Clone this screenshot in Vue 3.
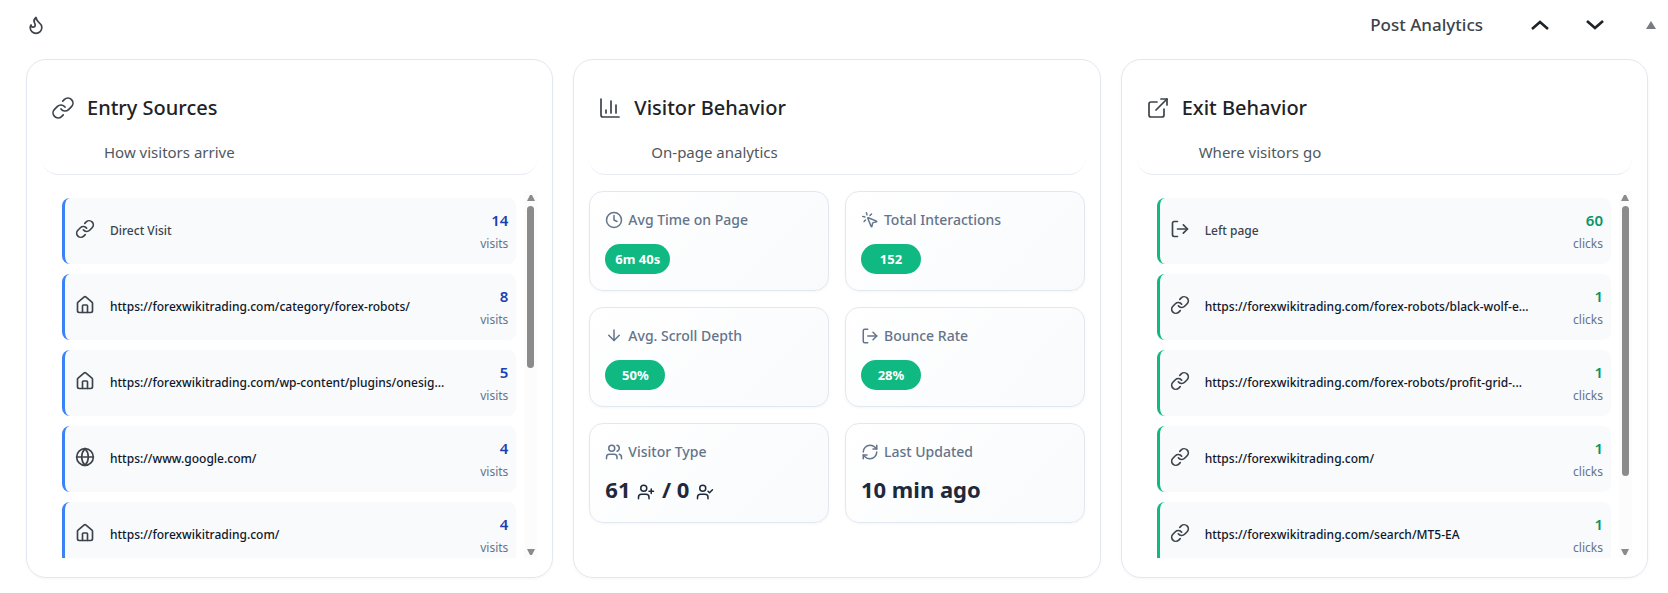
<script setup>
import { h } from 'vue'

const link =
  '<path d="M10 13a5 5 0 0 0 7.54.54l3-3a5 5 0 0 0-7.07-7.07l-1.72 1.71"/><path d="M14 11a5 5 0 0 0-7.54-.54l-3 3a5 5 0 0 0 7.07 7.07l1.71-1.71"/>'
const person = '<path d="M16 21v-2a4 4 0 0 0-4-4H6a4 4 0 0 0-4 4v2"/><circle cx="9" cy="7" r="4"/>'

const shapes = {
  flame:
    '<path d="M8.5 14.5A2.5 2.5 0 0 0 11 12c0-1.38-.5-2-1-3-1.072-2.143-.224-4.054 2-6 .5 2.5 2 4.9 4 6.5 2 1.6 3 3.5 3 5.5a7 7 0 1 1-14 0c0-1.153.433-2.294 1-3a2.5 2.5 0 0 0 2.5 2.5z"/>',
  link,
  chart: '<path d="M3 3v16a2 2 0 0 0 2 2h16"/><path d="M18 17V9"/><path d="M13 17V5"/><path d="M8 17v-3"/>',
  external:
    '<path d="M15 3h6v6"/><path d="M10 14 21 3"/><path d="M18 13v6a2 2 0 0 1-2 2H5a2 2 0 0 1-2-2V8a2 2 0 0 1 2-2h6"/>',
  house:
    '<path d="M15 21v-8a1 1 0 0 0-1-1h-4a1 1 0 0 0-1 1v8"/><path d="M3 10a2 2 0 0 1 .709-1.528l7-5.999a2 2 0 0 1 2.582 0l7 5.999A2 2 0 0 1 21 10v9a2 2 0 0 1-2 2H5a2 2 0 0 1-2-2z"/>',
  globe:
    '<circle cx="12" cy="12" r="10"/><path d="M12 2a14.5 14.5 0 0 0 0 20 14.5 14.5 0 0 0 0-20"/><path d="M2 12h20"/>',
  exit: '<path d="M9 21H5a2 2 0 0 1-2-2V5a2 2 0 0 1 2-2h4"/><path d="m16 17 5-5-5-5"/><path d="M21 12H9"/>',
  clock: '<circle cx="12" cy="12" r="10"/><path d="M12 6v6l4 2"/>',
  click:
    '<path d="M14 4.1 12 6"/><path d="m5.1 8-2.9-.8"/><path d="m6 12-1.9 2"/><path d="M7.2 2.2 8 5.1"/><path d="M9.037 9.69a.498.498 0 0 1 .653-.653l11 4.5a.5.5 0 0 1-.074.949l-4.349 1.041a1 1 0 0 0-.74.739l-1.04 4.35a.5.5 0 0 1-.95.074z"/>',
  down: '<path d="M12 4v14"/><path d="m19 11-7 7-7-7"/>',
  users: person + '<path d="M22 21v-2a4 4 0 0 0-3-3.87"/><path d="M16 3.13a4 4 0 0 1 0 7.75"/>',
  userPlus: person + '<path d="M19 8v6"/><path d="M22 11h-6"/>',
  userCheck: person + '<path d="m16 11 2 2 4-4"/>',
  refresh:
    '<path d="M3 12a9 9 0 0 1 9-9 9.75 9.75 0 0 1 6.74 2.74L21 8"/><path d="M21 3v5h-5"/><path d="M21 12a9 9 0 0 1-9 9 9.75 9.75 0 0 1-6.74-2.74L3 16"/><path d="M8 16H3v5"/>',
}

const Icon = (props) =>
  h('svg', {
    class: 'icon',
    viewBox: '0 0 24 24',
    'aria-hidden': 'true',
    innerHTML: shapes[props.name],
  })
Icon.props = ['name']

const cards = [
  {
    id: 'entry',
    icon: 'link',
    title: 'Entry Sources',
    subtitle: 'How visitors arrive',
    unit: 'visits',
    thumb: 48,
    items: [
      { icon: 'link', text: 'Direct Visit', count: 14 },
      { icon: 'house', text: 'https://forexwikitrading.com/category/forex-robots/', url: true, count: 8 },
      { icon: 'house', text: 'https://forexwikitrading.com/wp-content/plugins/onesig...', url: true, count: 5 },
      { icon: 'globe', text: 'https://www.google.com/', url: true, count: 4 },
      { icon: 'house', text: 'https://forexwikitrading.com/', url: true, count: 4 },
    ],
  },
  {
    id: 'behavior',
    icon: 'chart',
    title: 'Visitor Behavior',
    subtitle: 'On-page analytics',
    metrics: [
      { icon: 'clock', label: 'Avg Time on Page', pill: '6m 40s' },
      { icon: 'click', label: 'Total Interactions', pill: '152' },
      { icon: 'down', label: 'Avg. Scroll Depth', pill: '50%' },
      { icon: 'exit', label: 'Bounce Rate', pill: '28%' },
      { icon: 'users', label: 'Visitor Type', visitors: { fresh: 61, returning: 0 } },
      { icon: 'refresh', label: 'Last Updated', value: '10 min ago' },
    ],
  },
  {
    id: 'exit',
    icon: 'external',
    title: 'Exit Behavior',
    subtitle: 'Where visitors go',
    unit: 'clicks',
    thumb: 80,
    items: [
      { icon: 'exit', text: 'Left page', count: 60 },
      { icon: 'link', text: 'https://forexwikitrading.com/forex-robots/black-wolf-e...', url: true, count: 1 },
      { icon: 'link', text: 'https://forexwikitrading.com/forex-robots/profit-grid-...', url: true, count: 1 },
      { icon: 'link', text: 'https://forexwikitrading.com/', url: true, count: 1 },
      { icon: 'link', text: 'https://forexwikitrading.com/search/MT5-EA', url: true, count: 1 },
    ],
  },
]
</script>

<template>
  <div class="panel">
    <header class="bar">
      <Icon name="flame" class="bar-icon" />
      <h2 class="bar-title">Post Analytics</h2>
      <div class="bar-actions">
        <button type="button" aria-label="Move up">
          <svg class="chevron" viewBox="0 0 18 10"><path d="m1 9 8-7 8 7" /></svg>
        </button>
        <button type="button" aria-label="Move down">
          <svg class="chevron" viewBox="0 0 18 10"><path d="m1 1 8 7 8-7" /></svg>
        </button>
      </div>
      <button type="button" class="toggle" aria-label="Toggle panel">
        <svg viewBox="0 0 10 8"><path d="M5 0l5 8H0z" /></svg>
      </button>
    </header>

    <main class="cards">
      <section v-for="card in cards" :key="card.id" class="card" :class="card.id">
        <div class="head">
          <h3 class="title"><Icon :name="card.icon" />{{ card.title }}</h3>
          <p class="subtitle">{{ card.subtitle }}</p>
        </div>

        <div v-if="card.items" class="scroller">
          <ul class="list">
            <li v-for="item in card.items" :key="item.text" class="item">
              <Icon :name="item.icon" />
              <a v-if="item.url" class="name" href="#">{{ item.text }}</a>
              <span v-else class="name plain">{{ item.text }}</span>
              <span class="stat">
                <strong>{{ item.count }}</strong>
                <small>{{ card.unit }}</small>
              </span>
            </li>
          </ul>
          <div class="track" aria-hidden="true">
            <svg class="arrow" viewBox="0 0 8 6"><path d="M3 0h2l3 6H0z" /></svg>
            <div class="rail"><div class="thumb" :style="{ height: card.thumb + '%' }"></div></div>
            <svg class="arrow" viewBox="0 0 8 6"><path d="M0 0h8L5 6H3z" /></svg>
          </div>
        </div>

        <div v-else class="metrics">
          <div v-for="m in card.metrics" :key="m.label" class="metric">
            <div class="label"><Icon :name="m.icon" />{{ m.label }}</div>
            <span v-if="m.pill" class="pill">{{ m.pill }}</span>
            <div v-else-if="m.visitors" class="value">
              {{ m.visitors.fresh }} <Icon name="userPlus" /> / {{ m.visitors.returning }}
              <Icon name="userCheck" />
            </div>
            <div v-else class="value">{{ m.value }}</div>
          </div>
        </div>
      </section>
    </main>
  </div>
</template>

<style>
body {
  margin: 0;
  background: #fff;
}
</style>

<style scoped>
.panel {
  font-family: 'Noto Sans', 'Open Sans', sans-serif;
  color: #3c434a;
  padding: 0 20px 14px 26px;
}
h2,
h3,
p,
ul {
  margin: 0;
  padding: 0;
}
button {
  display: flex;
  padding: 0;
  border: 0;
  background: none;
  color: inherit;
}
.icon {
  flex: none;
  width: 20px;
  height: 20px;
  fill: none;
  stroke: currentColor;
  stroke-width: 2;
  stroke-linecap: round;
  stroke-linejoin: round;
}
.bar {
  display: flex;
  align-items: center;
  height: 50px;
  margin-bottom: 9px;
  margin-right: -8px;
}
.bar-title {
  margin-left: auto;
  font-size: 17px;
  line-height: 24px;
  font-weight: 500;
}
.bar-actions {
  display: flex;
  gap: 37px;
  margin: 0 42px 0 48px;
}
.chevron {
  width: 18px;
  height: 10px;
  fill: none;
  stroke: #1d2327;
  stroke-width: 2.6;
}
.toggle svg {
  width: 10px;
  height: 8px;
  fill: #787c82;
}
.cards {
  display: grid;
  grid-template-columns: repeat(3, minmax(0, 1fr));
  gap: 20px;
}
.card {
  box-sizing: border-box;
  padding: 15px 15px 19px;
  border: 1px solid #e2e8f0;
  border-radius: 20px;
  box-shadow: 0 1px 3px rgba(15, 23, 42, 0.04);
}
.head {
  padding: 16px 9px 10px;
  margin-bottom: 16px;
  border-bottom: 1px solid #e9edf3;
  border-radius: 16px;
}
.title {
  display: flex;
  align-items: center;
  gap: 12px;
  font-size: 20px;
  line-height: 34px;
  font-weight: 500;
  color: #1d2327;
}
.title .icon {
  width: 24px;
  height: 24px;
  color: #3c434a;
  stroke-width: 1.7;
}
.subtitle {
  margin: 15px 0 0 53px;
  font-size: 15px;
  line-height: 24px;
  color: #50575e;
}
.scroller {
  display: flex;
  gap: 8px;
  height: 367px;
  margin-left: 20px;
}
.list {
  box-sizing: border-box;
  flex: 1;
  min-width: 0;
  padding-top: 7px;
  overflow: hidden;
  list-style: none;
}
.item {
  display: flex;
  align-items: center;
  padding: 10px 8px 10px 10px;
  margin-bottom: 10px;
  border-left: 3px solid #3b82f6;
  border-radius: 8px;
  background: #f8fafc;
}
.item .icon {
  padding-bottom: 4px;
  margin-right: 15px;
}
.exit .item {
  border-left-color: #10b981;
}
.name {
  flex: 1;
  min-width: 0;
  overflow: hidden;
  white-space: nowrap;
  font-size: 12px;
  line-height: 20px;
  font-weight: 500;
  color: #0f172a;
  text-decoration: none;
}
.plain {
  color: #3c434a;
}
.stat {
  display: flex;
  flex-direction: column;
  gap: 2px;
  text-align: right;
}
.stat strong {
  font-size: 15px;
  line-height: 24px;
  font-weight: 600;
  color: #1e40af;
}
.exit .stat strong {
  color: #059669;
}
.stat small {
  font-size: 12px;
  line-height: 20px;
  color: #64748b;
}
.track {
  display: flex;
  flex-direction: column;
  align-items: center;
  gap: 5px;
  box-sizing: border-box;
  width: 13px;
  padding: 4px 0 3px;
  background: #fcfcfc;
}
.arrow {
  width: 8px;
  height: 6px;
  fill: #8b8b8b;
}
.rail {
  flex: 1;
  width: 7px;
}
.thumb {
  border-radius: 4px;
  background: #8b8b8b;
}
.metrics {
  display: grid;
  grid-template-columns: repeat(2, minmax(0, 1fr));
  gap: 16px;
}
.metric {
  padding: 16px 15px;
  border: 1px solid #e2e8f0;
  border-radius: 14px;
  background: linear-gradient(135deg, #fff, #f8fafc);
  box-shadow: 0 1px 3px rgba(15, 23, 42, 0.04);
}
.label {
  display: flex;
  align-items: center;
  gap: 5px;
  font-size: 14px;
  line-height: 24px;
  font-weight: 500;
  color: #64748b;
}
.label .icon,
.value .icon {
  width: 18px;
  height: 18px;
}
.pill {
  display: flex;
  align-items: center;
  justify-content: center;
  box-sizing: border-box;
  width: fit-content;
  min-width: 60px;
  height: 30px;
  margin-top: 12px;
  padding: 0 10px;
  border-radius: 15px;
  background: #10b981;
  color: #fff;
  font-size: 13px;
  font-weight: 700;
}
.value {
  margin-top: 8px;
  font-size: 22px;
  line-height: 34px;
  font-weight: 700;
  color: #1e293b;
}
.value .icon {
  margin: 0 1px;
  vertical-align: -3px;
}
</style>
